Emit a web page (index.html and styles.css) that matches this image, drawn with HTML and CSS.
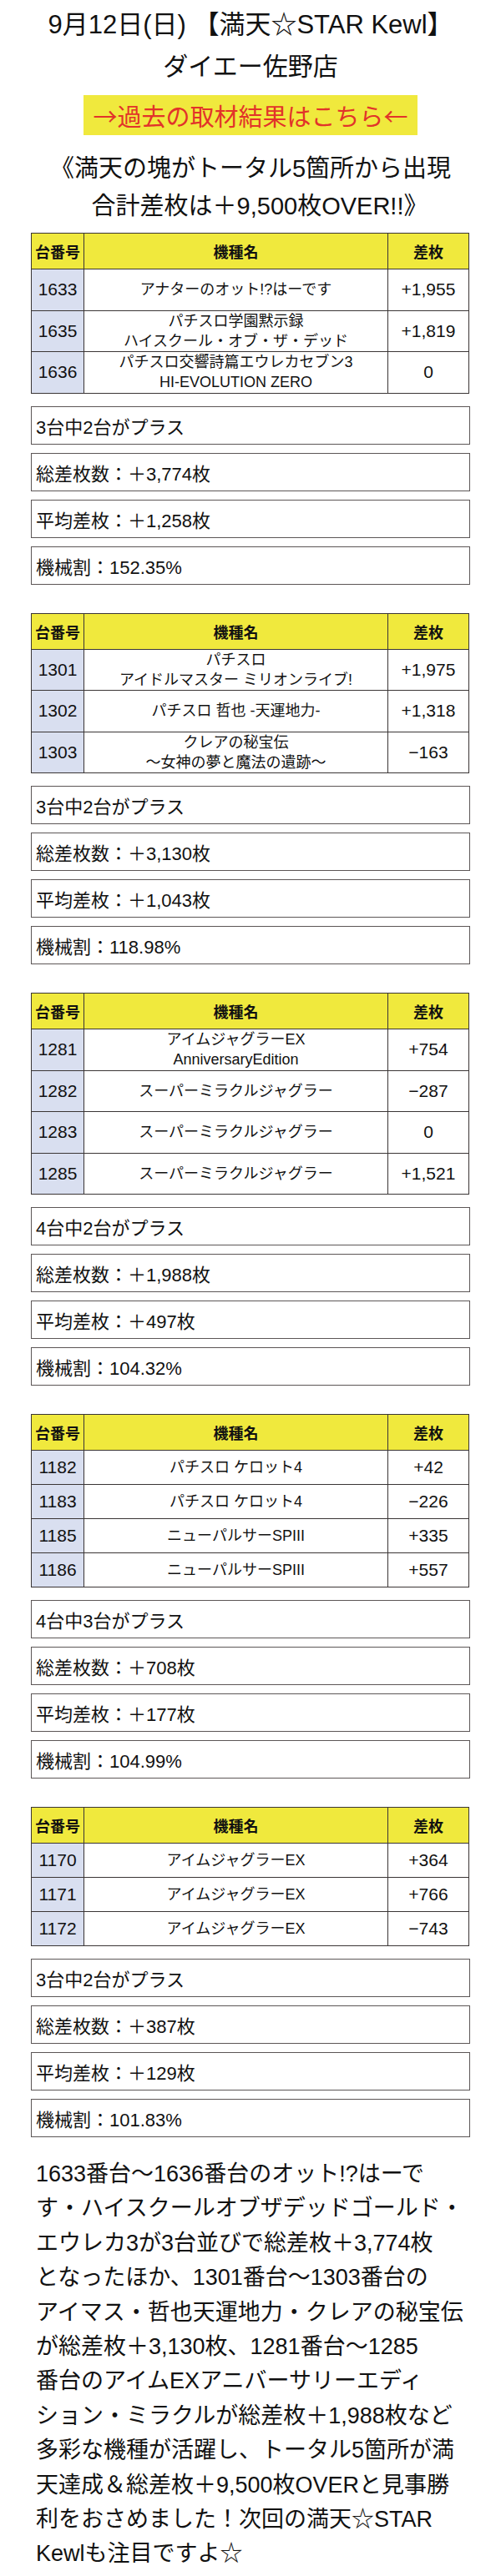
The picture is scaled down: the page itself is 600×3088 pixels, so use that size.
FILE: index.html
```html
<!DOCTYPE html>
<html lang="ja">
<head>
<meta charset="utf-8">
<title>9月12日(日) 【満天☆STAR Kewl】 ダイエー佐野店</title>
<link rel="stylesheet" href="styles.css">
</head>
<body>
<div class="page">
  <p class="title">9月12日(日) 【満天☆STAR Kewl】</p>
  <p class="store">ダイエー佐野店</p>
  <div class="banner">→過去の取材結果はこちら←</div>
  <p class="lead">《満天の塊がトータル5箇所から出現<br><span class="lead2">合計差枚は＋9,500枚OVER!!》</span></p>

  <section class="block">
    <table class="result tall">
      <colgroup><col class="c1"><col class="c2"><col class="c3"></colgroup>
      <thead><tr><th>台番号</th><th>機種名</th><th>差枚</th></tr></thead>
      <tbody>
        <tr><td class="no">1633</td><td class="name">アナターのオット!?はーです</td><td class="val">+1,955</td></tr>
        <tr><td class="no">1635</td><td class="name">パチスロ学園黙示録<br>ハイスクール・オブ・ザ・デッド</td><td class="val">+1,819</td></tr>
        <tr><td class="no">1636</td><td class="name">パチスロ交響詩篇エウレカセブン3<br>HI-EVOLUTION ZERO</td><td class="val">0</td></tr>
      </tbody>
    </table>
    <div class="stats">
      <div class="stat">3台中2台がプラス</div>
      <div class="stat">総差枚数：＋3,774枚</div>
      <div class="stat">平均差枚：＋1,258枚</div>
      <div class="stat">機械割：152.35%</div>
    </div>
  </section>

  <section class="block">
    <table class="result tall">
      <colgroup><col class="c1"><col class="c2"><col class="c3"></colgroup>
      <thead><tr><th>台番号</th><th>機種名</th><th>差枚</th></tr></thead>
      <tbody>
        <tr><td class="no">1301</td><td class="name">パチスロ<br>アイドルマスター ミリオンライブ!</td><td class="val">+1,975</td></tr>
        <tr><td class="no">1302</td><td class="name">パチスロ 哲也 -天運地力-</td><td class="val">+1,318</td></tr>
        <tr><td class="no">1303</td><td class="name">クレアの秘宝伝<br>～女神の夢と魔法の遺跡～</td><td class="val">−163</td></tr>
      </tbody>
    </table>
    <div class="stats">
      <div class="stat">3台中2台がプラス</div>
      <div class="stat">総差枚数：＋3,130枚</div>
      <div class="stat">平均差枚：＋1,043枚</div>
      <div class="stat">機械割：118.98%</div>
    </div>
  </section>

  <section class="block">
    <table class="result tall">
      <colgroup><col class="c1"><col class="c2"><col class="c3"></colgroup>
      <thead><tr><th>台番号</th><th>機種名</th><th>差枚</th></tr></thead>
      <tbody>
        <tr><td class="no">1281</td><td class="name">アイムジャグラーEX<br>AnniversaryEdition</td><td class="val">+754</td></tr>
        <tr><td class="no">1282</td><td class="name">スーパーミラクルジャグラー</td><td class="val">−287</td></tr>
        <tr><td class="no">1283</td><td class="name">スーパーミラクルジャグラー</td><td class="val">0</td></tr>
        <tr><td class="no">1285</td><td class="name">スーパーミラクルジャグラー</td><td class="val">+1,521</td></tr>
      </tbody>
    </table>
    <div class="stats">
      <div class="stat">4台中2台がプラス</div>
      <div class="stat">総差枚数：＋1,988枚</div>
      <div class="stat">平均差枚：＋497枚</div>
      <div class="stat">機械割：104.32%</div>
    </div>
  </section>

  <section class="block">
    <table class="result short">
      <colgroup><col class="c1"><col class="c2"><col class="c3"></colgroup>
      <thead><tr><th>台番号</th><th>機種名</th><th>差枚</th></tr></thead>
      <tbody>
        <tr><td class="no">1182</td><td class="name">パチスロ ケロット4</td><td class="val">+42</td></tr>
        <tr><td class="no">1183</td><td class="name">パチスロ ケロット4</td><td class="val">−226</td></tr>
        <tr><td class="no">1185</td><td class="name">ニューパルサーSPIII</td><td class="val">+335</td></tr>
        <tr><td class="no">1186</td><td class="name">ニューパルサーSPIII</td><td class="val">+557</td></tr>
      </tbody>
    </table>
    <div class="stats">
      <div class="stat">4台中3台がプラス</div>
      <div class="stat">総差枚数：＋708枚</div>
      <div class="stat">平均差枚：＋177枚</div>
      <div class="stat">機械割：104.99%</div>
    </div>
  </section>

  <section class="block">
    <table class="result short">
      <colgroup><col class="c1"><col class="c2"><col class="c3"></colgroup>
      <thead><tr><th>台番号</th><th>機種名</th><th>差枚</th></tr></thead>
      <tbody>
        <tr><td class="no">1170</td><td class="name">アイムジャグラーEX</td><td class="val">+364</td></tr>
        <tr><td class="no">1171</td><td class="name">アイムジャグラーEX</td><td class="val">+766</td></tr>
        <tr><td class="no">1172</td><td class="name">アイムジャグラーEX</td><td class="val">−743</td></tr>
      </tbody>
    </table>
    <div class="stats">
      <div class="stat">3台中2台がプラス</div>
      <div class="stat">総差枚数：＋387枚</div>
      <div class="stat">平均差枚：＋129枚</div>
      <div class="stat">機械割：101.83%</div>
    </div>
  </section>

  <p class="summary">1633番台～1636番台のオット!?はーで<br>す・ハイスクールオブザデッドゴールド・<br>エウレカ3が3台並びで総差枚＋3,774枚<br>となったほか、1301番台～1303番台の<br>アイマス・哲也天運地力・クレアの秘宝伝<br>が総差枚＋3,130枚、1281番台～1285<br>番台のアイムEXアニバーサリーエディ<br>ション・ミラクルが総差枚＋1,988枚など<br>多彩な機種が活躍し、トータル5箇所が満<br>天達成＆総差枚＋9,500枚OVERと見事勝<br>利をおさめました！次回の満天☆STAR<br>Kewlも注目ですよ☆</p>
</div>
</body>
</html>
```

FILE: styles.css
```css
* { box-sizing: border-box; }

html, body {
  margin: 0;
  padding: 0;
  background: #ffffff;
}

body {
  font-family: "Liberation Sans", "Noto Sans CJK JP", sans-serif;
  color: #111111;
}

.page {
  width: 600px;
  margin: 0 auto;
  padding: 0 37px;
}

.title {
  margin: 10px 0 0;
  font-size: 31px;
  line-height: 40px;
  text-align: center;
  white-space: nowrap;
}

.store {
  margin: 10px 0 0;
  font-size: 30px;
  line-height: 40px;
  text-align: center;
}

.banner {
  width: 400px;
  height: 48px;
  margin: 14px auto 0;
  background: #f0e93d;
  color: #e2332a;
  font-family: "Noto Sans CJK JP", sans-serif;
  font-size: 29px;
  line-height: 48px;
  text-align: center;
  white-space: nowrap;
}

.lead {
  margin: 18px -30px 0;
  font-size: 29px;
  line-height: 45px;
  text-align: center;
  white-space: nowrap;
}

.lead2 {
  padding-left: 22px;
}

.block {
  margin: 9px 0 0;
  padding-bottom: 24px;
}

.block + .block {
  margin-top: 0;
}

.block + .block .result {
  margin-top: 10px;
}

.result {
  width: 525px;
  border-collapse: collapse;
  table-layout: fixed;
  border: 1px solid #3a3535;
}

.c1 { width: 63px; }
.c3 { width: 97px; }

.result th,
.result td {
  border: 1px solid #3a3535;
  padding: 0;
  text-align: center;
  vertical-align: middle;
}

.result th {
  height: 43px;
  background: #f0e93d;
  font-size: 18px;
  font-weight: bold;
}

.result.tall td { height: 49.5px; }
.result.short td { height: 41px; }

.result td.no {
  background: #d9dff0;
  font-size: 21px;
}

.result td.name {
  font-size: 18px;
  line-height: 24px;
}

.result td.val {
  font-size: 21px;
}

.stats {
  display: flex;
  flex-direction: column;
  gap: 10px;
  margin-top: 15px;
}

.stat {
  height: 46px;
  border: 1px solid #5c5656;
  display: flex;
  align-items: center;
  padding-left: 5px;
  font-size: 22px;
}

.summary {
  margin: 0;
  padding-left: 6px;
  font-size: 27px;
  line-height: 41.4px;
  white-space: nowrap;
}
```
